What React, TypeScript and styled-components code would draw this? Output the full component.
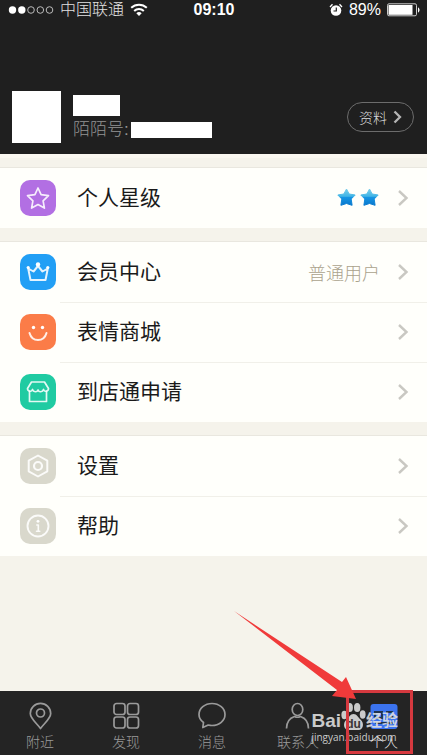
import React from "react";
import styled, { createGlobalStyle } from "styled-components";

const GlobalStyle = createGlobalStyle`
  *, *::before, *::after { box-sizing: border-box; }
  body {
    margin: 0;
    background: #f5f3eb;
    font-family: "Liberation Sans", "Noto Sans CJK SC", sans-serif;
  }
  button { font: inherit; color: inherit; background: none; border: 0; padding: 0; cursor: pointer; }
  a { color: inherit; text-decoration: none; }
  svg { display: block; flex: none; }
`;

const Page = styled.div`
  position: relative;
  display: flex;
  flex-direction: column;
  min-height: 100vh;
  overflow: hidden;
`;

const Header = styled.header`
  display: flex;
  flex-direction: column;
  gap: 71px;
  padding-bottom: 11px;
  background: #1f1f1f;
  color: #fff;
`;

const StatusBar = styled.div`
  display: grid;
  grid-template-columns: 1fr auto 1fr;
  align-items: center;
  height: 20px;
  padding: 0 7px 0 8px;
  font-size: 16px;
  line-height: 20px;
`;

const StatusSide = styled.div<{ $end?: boolean }>`
  display: flex;
  align-items: center;
  gap: 6px;
  justify-content: ${(p) => (p.$end ? "flex-end" : "flex-start")};
`;

const Carrier = styled.span`
  color: #e2e2e2;
  font-weight: 300;
`;

const Time = styled.time`
  font-weight: 700;
`;

const Profile = styled.section`
  display: flex;
  align-items: center;
  gap: 12px;
  height: 52px;
  padding: 0 13px 0 12px;
`;

const Avatar = styled.div`
  width: 49px;
  height: 52px;
  background: #fff;
`;

const Identity = styled.div`
  flex: 1;
  display: flex;
  flex-direction: column;
  gap: 3px;
  padding-top: 2px;
`;

const NameMask = styled.div`
  width: 47px;
  height: 21px;
  background: #fff;
`;

const NumberLine = styled.div`
  display: flex;
  align-items: center;
  gap: 2px;
  color: #949494;
  font-size: 17px;
  font-weight: 300;
  line-height: 22px;
`;

const NumberMask = styled.span`
  width: 81px;
  height: 16px;
  background: #fff;
`;

const ProfileButton = styled.button`
  display: flex;
  align-items: center;
  justify-content: center;
  gap: 6px;
  width: 67px;
  height: 30px;
  border: 1px solid #6c6c6c;
  border-radius: 15px;
  color: #dcdcdc;
  font-size: 14px;
  font-weight: 300;
`;

const Content = styled.main`
  flex: 1;
  display: flex;
  flex-direction: column;
  gap: 14px;
  padding: 10px 0 14px;
  border-top: 4px solid #faf7f0;
`;

const Group = styled.ul`
  margin: 0;
  padding: 0;
  list-style: none;
  background: #fffffb;
  box-shadow: 0 -1px 0 #e9e7df;
`;

const Item = styled.li`
  & + & > a::before {
    content: "";
    position: absolute;
    top: 0;
    left: 60px;
    right: 0;
    border-top: 1px solid #f1f0e9;
  }
`;

const Row = styled.a`
  position: relative;
  display: flex;
  align-items: center;
  gap: 21px;
  height: 60px;
  padding: 0 18px 0 20px;
`;

const IconTile = styled.span<{ $color: string }>`
  display: grid;
  place-items: center;
  width: 36px;
  height: 36px;
  border-radius: 10px;
  background: ${(p) => p.$color};
`;

const RowLabel = styled.span`
  flex: 1;
  color: #1a1a1a;
  font-size: 21px;
  font-weight: 400;
  line-height: 30px;
`;

const RowEnd = styled.span`
  display: flex;
  align-items: center;
  gap: 17px;
  color: #aaa28c;
  font-size: 18px;
  font-weight: 300;
`;

const Stars = styled.span`
  display: flex;
  gap: 3px;
`;

const TabBar = styled.nav`
  height: 64px;
  background: #242424;
  overflow: hidden;
`;

const Tabs = styled.div`
  display: grid;
  grid-template-columns: repeat(5, 1fr);
  height: 100%;
  margin-left: -3px;
`;

const Tab = styled.button<{ $active?: boolean }>`
  display: flex;
  flex-direction: column;
  align-items: center;
  gap: 2px;
  padding-top: 11px;
  color: ${(p) => (p.$active ? "#eeeeee" : "#9a9a9a")};
  font-size: 14px;
  font-weight: 300;
  line-height: 20px;
`;

const Highlight = styled.div`
  position: absolute;
  right: 14px;
  bottom: 1px;
  width: 67px;
  height: 64px;
  border: 3px solid #d6393f;
`;

const Arrow = styled.svg`
  position: absolute;
  right: 70px;
  bottom: 55px;
`;

const Watermark = styled.div`
  position: absolute;
  right: 29px;
  bottom: 12px;
  color: rgba(226, 226, 226, 0.88);
`;

const MarkTop = styled.div`
  display: flex;
  align-items: flex-end;
  justify-content: space-between;
  height: 29px;
  font-size: 19px;
  font-weight: 700;
  line-height: 20px;
`;

const MarkWord = styled.span`
  font-size: 16px;
`;

const MarkUrl = styled.div`
  font-family: "Open Sans", sans-serif;
  font-size: 10px;
  line-height: 12px;
`;

const Chevron = ({ color = "#c9c8c2" }: { color?: string }) => (
  <svg width="12" height="18" viewBox="0 0 12 18" fill="none" stroke={color} strokeWidth="2.4" aria-hidden>
    <path d="M2 2l7.500 7L2 16" />
  </svg>
);

const BlueStar = () => (
  <svg width="20" height="20" viewBox="0 0 20 20" aria-hidden>
    <defs>
      <linearGradient id="blueStar" x1="0" y1="0" x2="0" y2="1">
        <stop offset="0" stopColor="#79cdea" />
        <stop offset="0.45" stopColor="#42b5e6" />
        <stop offset="0.5" stopColor="#1795e4" />
        <stop offset="1" stopColor="#0878cd" />
      </linearGradient>
    </defs>
    <path
      d="M9.500 1l2.700 5 6 1-4 4 .9 6.300-5.600-1.800-5.600 1.800.9-6.300-4-4 6-1z"
      fill="url(#blueStar)"
      stroke="url(#blueStar)"
      strokeWidth="1"
      strokeLinejoin="round"
    />
  </svg>
);

const TileIcon = ({ children }: { children: React.ReactNode }) => (
  <svg
    width="24"
    height="24"
    viewBox="0 0 24 24"
    fill="none"
    stroke="#fff"
    strokeOpacity="0.88"
    strokeWidth="1.7"
    strokeLinejoin="round"
    strokeLinecap="round"
    aria-hidden
  >
    {children}
  </svg>
);

const StarIcon = () => (
  <TileIcon>
    <path d="M12 2l3.100 6.700 7.400 1-5.400 5.100 1.300 7.300L12 18.500l-6.400 3.600 1.300-7.300-5.400-5.100 7.400-1z" />
  </TileIcon>
);

const CrownIcon = () => (
  <TileIcon>
    <path d="M4.500 20h15L21.800 8.500 16.500 11.500 12 6l-4.500 5.500L2.200 8.500z" strokeWidth="2" />
    <g fill="#fff" stroke="none">
      <circle cx="12" cy="4.500" r="2.200" />
      <circle cx="2.200" cy="7.500" r="1.600" />
      <circle cx="21.800" cy="7.500" r="1.600" />
    </g>
  </TileIcon>
);

const SmileIcon = () => (
  <TileIcon>
    <path d="M3.500 13c1.200 4.300 4.500 7 8.500 7s7.300-2.700 8.500-7" strokeWidth="2" />
    <g fill="#fff" stroke="none">
      <circle cx="7.500" cy="7.500" r="1.700" />
      <circle cx="16.500" cy="7.500" r="1.700" />
    </g>
  </TileIcon>
);

const ShopIcon = () => (
  <TileIcon>
    <path d="M5.500 2h13l4 6.500c0 3-4 3.800-5 1-1 2.800-4.500 3-5.500.5-1 2.500-4.500 2.300-5.500-.5-1 2.800-5 2-5-1z" />
    <path d="M3.500 11.500V21.500h17V11.500" />
  </TileIcon>
);

const SettingsIcon = () => (
  <TileIcon>
    <path d="M12 1.500l9.300 5.200v10.600L12 22.500l-9.300-5.200V6.700z" strokeWidth="2" />
    <circle cx="12" cy="12" r="4" strokeWidth="2.200" />
  </TileIcon>
);

const InfoIcon = () => (
  <TileIcon>
    <circle cx="12" cy="12" r="10.500" strokeWidth="1.900" />
    <circle cx="12" cy="7.300" r="1.400" fill="#fff" stroke="none" />
    <path d="M10.800 11h1.500v6M10.500 17.300h3.300" strokeWidth="1.600" />
  </TileIcon>
);

const TabIcon = ({ children }: { children: React.ReactNode }) => (
  <svg
    width="28"
    height="28"
    viewBox="0 0 28 28"
    fill="none"
    stroke="currentColor"
    strokeWidth="1.7"
    strokeLinejoin="round"
    aria-hidden
  >
    {children}
  </svg>
);

const tabs = [
  {
    label: "附近",
    icon: (
      <TabIcon>
        <path d="M14.500 26.500C10.500 21 4.300 16.500 4.300 11.500a10.200 10.200 0 0 1 20.400 0C24.700 16.500 18.500 21 14.500 26.500z" />
        <circle cx="14.500" cy="11" r="4" />
      </TabIcon>
    ),
  },
  {
    label: "发现",
    icon: (
      <TabIcon>
        <rect x="2" y="1.500" width="11" height="11" rx="2.500" />
        <rect x="15.500" y="1.500" width="11" height="11" rx="2.500" />
        <rect x="2" y="15" width="11" height="11" rx="2.500" />
        <rect x="15.500" y="15" width="11" height="11" rx="2.500" />
      </TabIcon>
    ),
  },
  {
    label: "消息",
    icon: (
      <TabIcon>
        <path d="M5.500 20.500C2.500 18.300 1 16 1 12.500 1 6.300 6.800 1.500 14 1.500s13 4.800 13 11-5.800 11-13 11c-1.300 0-2.600-.2-3.800-.5L4.800 25.500z" />
      </TabIcon>
    ),
  },
  {
    label: "联系人",
    icon: (
      <TabIcon>
        <ellipse cx="13.500" cy="7.500" rx="5.300" ry="6" />
        <path d="M2.500 26.500c0-6.500 3.500-10.500 8-12 2 1 4 1 6 0 4.500 1.500 8 5.500 8 12" />
      </TabIcon>
    ),
  },
  {
    label: "个人",
    active: true,
    icon: (
      <svg width="28" height="28" viewBox="0 0 28 28" aria-hidden>
        <rect x="0.500" y="2" width="27" height="25" rx="3" fill="#3b73ef" />
        <path d="M5 10h7v6H5zM16 10h7M16 15h7M5 21h18" fill="none" stroke="#20334f" strokeWidth="2" />
      </svg>
    ),
  },
];

interface Entry {
  label: string;
  color: string;
  icon: React.ReactNode;
  end?: React.ReactNode;
}

const groups: Entry[][] = [
  [
    {
      label: "个人星级",
      color: "#b26fe3",
      icon: <StarIcon />,
      end: (
        <Stars role="img" aria-label="2">
          <BlueStar />
          <BlueStar />
        </Stars>
      ),
    },
  ],
  [
    { label: "会员中心", color: "#229ff5", icon: <CrownIcon />, end: "普通用户" },
    { label: "表情商城", color: "#fb7c48", icon: <SmileIcon /> },
    { label: "到店通申请", color: "#20cba2", icon: <ShopIcon /> },
  ],
  [
    { label: "设置", color: "#d9d8cc", icon: <SettingsIcon /> },
    { label: "帮助", color: "#d9d8cc", icon: <InfoIcon /> },
  ],
];

export default function App() {
  return (
    <Page>
      <GlobalStyle />
      <Header>
        <StatusBar>
          <StatusSide>
            <svg width="46" height="10" viewBox="0 0 46 10" fill="none" stroke="#bbb" aria-hidden>
              <circle cx="4.500" cy="5" r="3.700" fill="#fff" stroke="none" />
              <circle cx="13.800" cy="5" r="3.700" fill="#fff" stroke="none" />
              <circle cx="23" cy="5" r="3.300" />
              <circle cx="32.300" cy="5" r="3.300" />
              <circle cx="41.500" cy="5" r="3.300" />
            </svg>
            <Carrier>中国联通</Carrier>
            <svg width="18" height="14" viewBox="0 0 18 14" fill="none" stroke="#fff" strokeWidth="2" aria-hidden>
              <path d="M1.200 4.800a11.300 11.300 0 0 1 15.600 0M4.200 8a7 7 0 0 1 9.600 0" />
              <path d="M6.300 10.300a4 4 0 0 1 5.400 0L9 13z" fill="#fff" stroke="none" />
            </svg>
          </StatusSide>
          <Time>09:10</Time>
          <StatusSide $end>
            <svg width="14" height="14" viewBox="0 0 14 14" fill="none" aria-hidden>
              <circle cx="7" cy="7.500" r="5.300" fill="#fff" />
              <path d="M7.300 4.500v3.500H4.500" stroke="#1f1f1f" strokeWidth="1.200" />
              <path d="M1 4l2.500-2.800M13 4l-2.500-2.800" stroke="#fff" strokeWidth="1.300" />
            </svg>
            <span>89%</span>
            <svg width="33" height="14" viewBox="0 0 33 14" aria-hidden>
              <rect x="0.500" y="0.800" width="29" height="12" rx="1.500" fill="none" stroke="#ccc" />
              <rect x="1.500" y="2" width="24" height="9.800" fill="#fff" />
              <path d="M31 4.500c2 .5 2 4.500 0 5z" fill="#fff" />
            </svg>
          </StatusSide>
        </StatusBar>
        <Profile>
          <Avatar />
          <Identity>
            <NameMask />
            <NumberLine>
              <span>陌陌号:</span>
              <NumberMask />
            </NumberLine>
          </Identity>
          <ProfileButton type="button">
            资料
            <svg width="9" height="14" viewBox="0 0 9 14" fill="none" stroke="#b4b4b4" strokeWidth="2.300" aria-hidden>
              <path d="M1.500 1.500L7 7l-5.500 5.500" />
            </svg>
          </ProfileButton>
        </Profile>
      </Header>
      <Content>
        {groups.map((entries) => (
          <Group key={entries[0].label}>
            {entries.map((entry) => (
              <Item key={entry.label}>
                <Row href="#">
                  <IconTile $color={entry.color}>{entry.icon}</IconTile>
                  <RowLabel>{entry.label}</RowLabel>
                  <RowEnd>
                    {entry.end}
                    <Chevron />
                  </RowEnd>
                </Row>
              </Item>
            ))}
          </Group>
        ))}
      </Content>
      <TabBar>
        <Tabs>
          {tabs.map((tab) => (
            <Tab key={tab.label} type="button" $active={tab.active}>
              {tab.icon}
              {tab.label}
            </Tab>
          ))}
        </Tabs>
      </TabBar>
      <Watermark>
        <MarkTop>
          <span>Bai</span>
          <svg width="25" height="29" viewBox="0 0 25 29" fill="currentColor" aria-hidden>
            <ellipse cx="3.300" cy="13" rx="2.900" ry="4.200" />
            <ellipse cx="8.700" cy="5.500" rx="3.200" ry="4.600" />
            <ellipse cx="16.200" cy="5.500" rx="3.200" ry="4.600" />
            <ellipse cx="21.700" cy="12.500" rx="2.900" ry="4.200" />
            <path d="M12.500 12c3.500 0 4.500 3.500 7 5.500 4 3.500 3 10.500-2 10.500H7.500c-5 0-6-7-2-10.500C8 15.500 9 12 12.500 12z" />
            <text x="12.500" y="26" textAnchor="middle" fontSize="12" fontWeight="700" fill="#3a3434">
              du
            </text>
          </svg>
          <MarkWord>经验</MarkWord>
        </MarkTop>
        <MarkUrl>jingyan.baidu.com</MarkUrl>
      </Watermark>
      <Highlight />
      <Arrow width="124" height="90" viewBox="0 0 124 90" aria-hidden>
        <path d="M1 1l108 71 4-5 10 22-24-3 5-6z" fill="#f03a3a" />
      </Arrow>
    </Page>
  );
}
